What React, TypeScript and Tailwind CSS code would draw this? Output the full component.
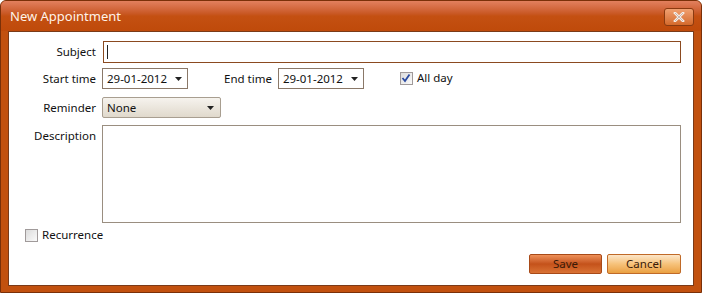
import React from "react";

const font = { fontFamily: '"Noto Sans", "Open Sans", sans-serif' };

function Caret() {
  return (
    <svg width="7" height="4" viewBox="0 0 7 4" className="shrink-0">
      <path d="M0 0 L7 0 L3.5 4 Z" fill="#222" />
    </svg>
  );
}

function DateBox({ value }: { value: string }) {
  return (
    <div className="w-[86px] h-[21px] border border-[#8a7868] bg-white flex items-center pl-[4px] pr-[5px] justify-between text-[11.5px] text-[#111]">
      <span>{value}</span>
      <Caret />
    </div>
  );
}

function Check({ checked }: { checked?: boolean }) {
  return (
    <div className="w-[13px] h-[13px] border border-[#a09a9a] bg-gradient-to-br from-[#dcdcdc] to-[#fafafa] flex items-center justify-center">
      {checked && (
        <svg width="10" height="10" viewBox="0 0 10 10">
          <path d="M1.5 5 L4 8 L8.5 1.5" stroke="#2a4aa0" strokeWidth="1.8" fill="none" />
        </svg>
      )}
    </div>
  );
}

export default function App() {
  return (
    <div
      className="w-[702px] h-[293px] bg-[#c2510f] border border-[#7a3008] rounded-t-[6px] flex flex-col overflow-hidden"
      style={font}
    >
      <div className="h-[30px] shrink-0 flex items-center justify-between pl-[9px] pr-[7px] bg-gradient-to-b from-[#e2805e] via-[#c45012] to-[#bf4a0a]">
        <span className="text-[13px] text-[#fff3ea] leading-none mt-[1px]">New Appointment</span>
        <div className="w-[30px] h-[18px] rounded-[3px] border border-[#8a3a10] bg-gradient-to-b from-[#f0a070] to-[#d46a2a] flex items-center justify-center mt-[2px]">
          <svg width="12" height="10" viewBox="0 0 12 10">
            <path d="M2 1 L10 9 M10 1 L2 9" stroke="#f4ece6" strokeWidth="2.6" strokeLinecap="square" />
            <path d="M2 1 L10 9 M10 1 L2 9" stroke="#6a3a2a" strokeWidth="0.6" strokeOpacity="0.5" />
          </svg>
        </div>
      </div>
      <div className="mx-[7px] h-[255px] border border-[#7a3a18] bg-white flex flex-col text-[11.5px] text-[#111]">
        <div className="flex items-center mt-[9px] h-[22px]">
          <span className="w-[87px] text-right">Subject</span>
          <div className="ml-[7px] w-[578px] h-[22px] border border-[#8b4a20] flex items-center pl-[3px]">
            <div className="w-[1px] h-[14px] bg-[#222]" />
          </div>
        </div>
        <div className="flex items-center mt-[5px] h-[21px]">
          <span className="w-[87px] text-right">Start time</span>
          <div className="ml-[6px]">
            <DateBox value="29-01-2012" />
          </div>
          <span className="ml-[36px]">End time</span>
          <div className="ml-[6px]">
            <DateBox value="29-01-2012" />
          </div>
          <div className="ml-[36px] flex items-center gap-[4px] -mt-[1px]">
            <Check checked />
            <span>All day</span>
          </div>
        </div>
        <div className="flex items-center mt-[8px] h-[21px]">
          <span className="w-[87px] text-right">Reminder</span>
          <div className="ml-[6px] w-[119px] h-[21px] rounded-[2px] border border-[#a89e90] bg-gradient-to-b from-[#f6f3ee] to-[#e0d9cc] flex items-center justify-between pl-[4px] pr-[6px]">
            <span>None</span>
            <Caret />
          </div>
        </div>
        <div className="flex mt-[7px]">
          <span className="w-[87px] text-right leading-[22px]">Description</span>
          <div className="ml-[6px] w-[579px] h-[98px] border border-[#9a8e80]" />
        </div>
        <div className="flex items-center mt-[5px] ml-[16px] gap-[4px] h-[14px]">
          <Check />
          <span>Recurrence</span>
        </div>
        <div className="flex justify-end gap-[5px] mt-[12px] mr-[12px]">
          <div className="w-[73px] h-[20px] rounded-[2px] border border-[#a84a18] bg-gradient-to-b from-[#ee9058] via-[#c4521a] to-[#da7234] flex items-center justify-center text-[#3a1a08]">
            Save
          </div>
          <div className="w-[74px] h-[20px] rounded-[2px] border border-[#c06a28] bg-gradient-to-b from-[#fce6c8] via-[#f6c27a] to-[#eaa040] flex items-center justify-center text-[#3a1a08]">
            Cancel
          </div>
        </div>
      </div>
    </div>
  );
}
